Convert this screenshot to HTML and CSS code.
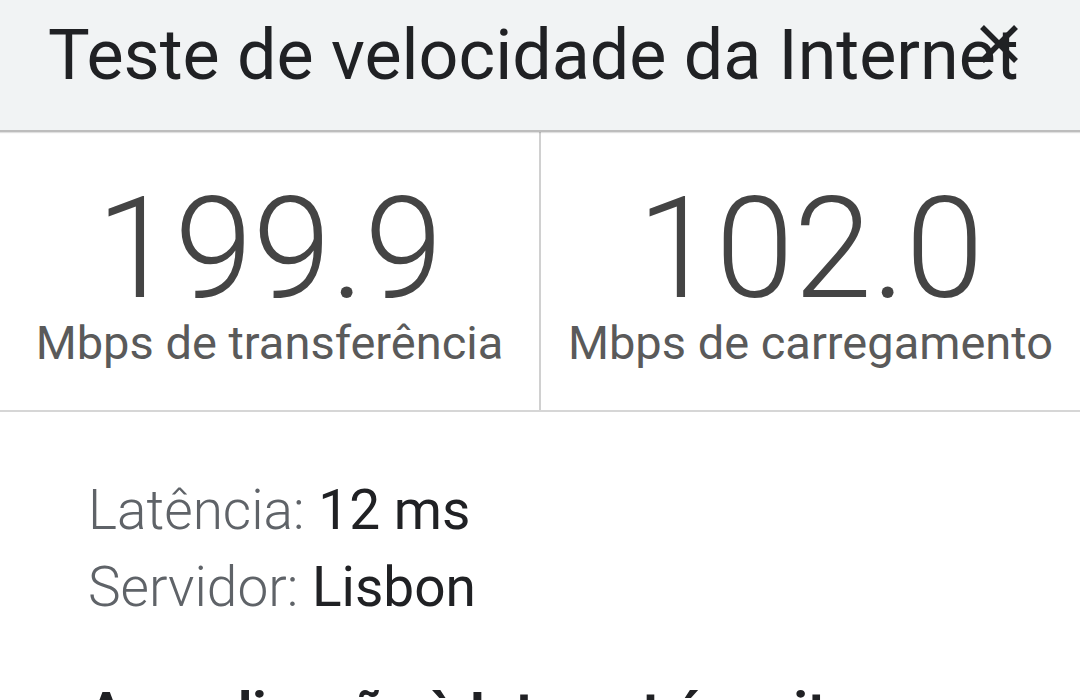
FILE: index.html
```html
<!DOCTYPE HTML>
<html lang="pt-PT">
<head>
	<meta http-equiv="Content-Type" content="text/html;charset=UTF-8">
	<title>Teste de velocidade da Internet</title>
	<link rel="stylesheet" href="styles.css">
</head>
<body>
	<div class="header">
		<h1 class="title">Teste de velocidade da Internet</h1>
		<svg class="close" width="40" height="40" viewBox="0 0 40 40">
			<path d="M3 3 L37 37 M37 3 L3 37" stroke="#202124" stroke-width="5.5" fill="none"/>
		</svg>
	</div>
	<div class="stats">
		<div class="stat">
			<div class="value">199.9</div>
			<div class="unit">Mbps de transferência</div>
		</div>
		<div class="stat">
			<div class="value">102.0</div>
			<div class="unit">Mbps de carregamento</div>
		</div>
	</div>
	<div class="info">
		<div class="row"><span class="key">Latência:</span> 12 ms</div>
		<div class="row"><span class="key">Servidor:</span> Lisbon</div>
		<p class="verdict">A sua ligação à Internet é muito rápida.</p>
	</div>
</body>
</html>
```

FILE: styles.css
```css
body{
	margin: 0;
	padding: 0;
	background-color: #fff;
	font-family: Roboto, "Noto Sans", sans-serif;
	overflow: hidden;
}
.header{
	position: relative;
	height: 130px;
	background-color: #f1f3f4;
	border-bottom: 2px solid #bdbdbd;
	box-shadow: 0 1px 1px rgba(0,0,0,.12);
}
.title{
	margin: 0;
	padding-left: 48px;
	font-size: 70px;
	font-weight: 400;
	line-height: 110px;
	color: #202124;
	white-space: nowrap;
}
.close{
	position: absolute;
	left: 979px;
	top: 24px;
}
.stats{
	display: flex;
	border-bottom: 2px solid #d6d6d6;
}
.stat{
	flex: 1;
	text-align: center;
	padding: 47px 0 44px;
}
.stat + .stat{
	border-left: 2px solid #d0d0d0;
}
.value{
	font-size: 141px;
	font-weight: 300;
	line-height: 140px;
	color: #444;
}
.unit{
	font-size: 47px;
	line-height: 47px;
	color: #5a5a5a;
}
.info{
	padding: 60px 88px 0;
}
.row{
	font-size: 55px;
	line-height: 77px;
	color: #202124;
}
.row .key{
	font-weight: 300;
	color: #5f6368;
}
.verdict{
	margin: 47px 0 0;
	font-size: 54px;
	font-weight: 700;
	line-height: 77px;
	color: #202124;
}
```
